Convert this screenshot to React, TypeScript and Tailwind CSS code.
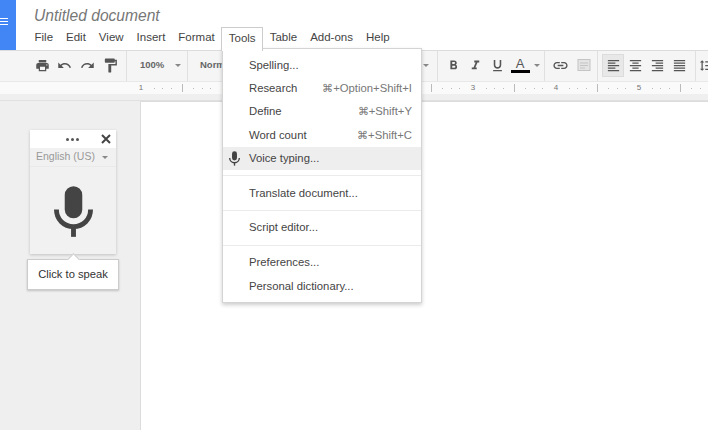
import React from "react";
import {
  MdPrint,
  MdUndo,
  MdRedo,
  MdFormatPaint,
  MdFormatBold,
  MdFormatItalic,
  MdFormatUnderlined,
  MdLink,
  MdFormatAlignLeft,
  MdFormatAlignCenter,
  MdFormatAlignRight,
  MdFormatAlignJustify,
  MdFormatLineSpacing,
} from "react-icons/md";

const menus = ["File", "Edit", "View", "Insert", "Format", "Tools", "Table", "Add-ons", "Help"];

const rulerLabels = ["1", "2", "", "", "3", "4", "5", ""];

type MenuRow = { label: string; keys?: string; active?: boolean };

const menuGroups: MenuRow[][] = [
  [
    { label: "Spelling..." },
    { label: "Research", keys: "⌘+Option+Shift+I" },
    { label: "Define", keys: "⌘+Shift+Y" },
    { label: "Word count", keys: "⌘+Shift+C" },
    { label: "Voice typing...", active: true },
  ],
  [{ label: "Translate document..." }],
  [{ label: "Script editor..." }],
  [{ label: "Preferences..." }, { label: "Personal dictionary..." }],
];

const Mic = ({ className }: { className: string }) => (
  <svg viewBox="0 0 40 52" className={className} fill="none">
    <rect x="11" y="0" width="18" height="33" rx="9" fill="currentColor" />
    <path d="M2.5 24c0 10 7.500 17.500 17.500 17.500S37.500 34 37.500 24" stroke="currentColor" strokeWidth="5" />
    <rect x="17.500" y="40" width="5" height="12" fill="currentColor" />
  </svg>
);

const Caret = () => <span className="w-0 h-0 border-x-[3px] border-x-transparent border-t-[3px] border-t-[#888]" />;

const Sep = () => <div className="w-px shrink-0 self-stretch -mb-[2px] bg-[#e0e0e0]" />;

const Tool = ({ children, className = "w-[22px]" }: { children: React.ReactNode; className?: string }) => (
  <div className={`${className} shrink-0 h-[23px] flex items-center justify-center text-[#555] text-[15px]`}>{children}</div>
);

const App = () => {
  return (
    <div className="relative w-[708px] h-[430px] overflow-hidden flex flex-col bg-[#efefef] font-['Liberation_Sans',Arial,sans-serif] text-[#444]">
      {/* Title and menu bar */}
      <header className="h-[51px] shrink-0 flex bg-white border-b border-[#dcdcdc]">
        <div className="w-[16px] h-[50px] bg-[#4285f4] flex flex-col gap-[2px] justify-center items-start pb-[8px]">
          <span className="w-[8px] h-px bg-white" />
          <span className="w-[8px] h-px bg-white" />
          <span className="w-[8px] h-px bg-white" />
        </div>
        <div className="pl-[18px] pt-[6px]">
          <h1 className="text-[15.6px] leading-[20px] italic text-[#777]">Untitled document</h1>
          <nav className="relative z-20 flex items-start mt-[1px] -ml-[6px] text-[11.500px] leading-[21px] text-[#444]">
            {menus.map((menu) =>
              menu === "Tools" ? (
                <span key={menu} className="px-[6.500px] h-[24px] bg-white border border-b-0 border-[#ccc]">
                  {menu}
                </span>
              ) : (
                <span key={menu} className="px-[6.500px]">
                  {menu}
                </span>
              )
            )}
          </nav>
        </div>
      </header>

      {/* Toolbar */}
      <div className="h-[30px] shrink-0 flex items-center bg-[#f5f5f5] pl-[31px] pb-[2px]">
        <Tool><MdPrint /></Tool>
        <Tool className="w-[23px]"><MdUndo /></Tool>
        <Tool className="w-[23px]"><MdRedo /></Tool>
        <Tool><MdFormatPaint className="text-[17px]" /></Tool>
        <div className="w-[5px] shrink-0" />
        <Sep />
        <div className="w-[60px] shrink-0 flex items-center pl-[13px] gap-[11px] text-[9.500px] font-bold text-[#666]">
          100%
          <Caret />
        </div>
        <Sep />
        <div className="w-[249px] shrink-0 pl-[12px] text-[9.500px] font-bold text-[#666] flex items-center">
          Normal
          <div className="ml-auto pr-[8px] flex"><Caret /></div>
        </div>
        <Sep />
        <div className="w-[4px] shrink-0" />
        <Tool><MdFormatBold /></Tool>
        <Tool><MdFormatItalic /></Tool>
        <Tool className="w-[23px]"><MdFormatUnderlined /></Tool>
        <Tool className="w-[22px] flex-col">
          <span className="text-[13px] leading-[13px] text-[#555]">A</span>
          <span className="w-[19px] h-[3px] bg-black" />
        </Tool>
        <div className="w-[12px] shrink-0 flex justify-center"><Caret /></div>
        <div className="w-px shrink-0" />
        <Sep />
        <div className="w-[4px] shrink-0" />
        <Tool><MdLink className="text-[17px]" /></Tool>
        <div className="w-[2px] shrink-0" />
        <Tool>
          <svg viewBox="0 0 14 14" className="w-[14px] h-[14px]" fill="none" stroke="#c4c4c4">
            <rect x="1" y="1.500" width="12" height="11" fill="#e4e4e4" />
            <path d="M3 5h8M3 7.500h8M3 10h5" />
          </svg>
        </Tool>
        <div className="w-[2px] shrink-0" />
        <Sep />
        <div className="w-[4px] shrink-0" />
        <Tool className="w-[22px] bg-[#e8e8e8] border border-[#dcdcdc]"><MdFormatAlignLeft /></Tool>
        <Tool><MdFormatAlignCenter /></Tool>
        <Tool><MdFormatAlignRight /></Tool>
        <Tool className="w-[23px]"><MdFormatAlignJustify /></Tool>
        <div className="w-[4px] shrink-0" />
        <Sep />
        <Tool className="w-[20px]"><MdFormatLineSpacing /></Tool>
      </div>

      {/* Ruler */}
      <div className="h-[20px] shrink-0 border-b border-[#e0e0e0] bg-[#efefef]">
        <div className="h-[13px] flex bg-[#fafafa] pl-[99px] border-t border-[#e8e8e8]">
          {rulerLabels.map((label, i) => (
            <div key={i} className="w-[83px] shrink-0 flex items-center text-[8px] text-[#777]">
              <span className={i === 0 ? "w-px" : "w-px h-[8px] bg-[#bbb]"} />
              <span className="flex-1 flex items-center justify-around px-[6px]">
                <span className={i === 0 ? "w-px" : "w-px h-px bg-[#bbb]"} />
                <span className={i === 0 ? "w-px" : "w-px h-px bg-[#bbb]"} />
                <span className={i === 0 ? "w-px" : "w-px h-px bg-[#bbb]"} />
                <span className="w-[10px] text-center">{label}</span>
                <span className="w-px h-px bg-[#bbb]" />
                <span className="w-px h-px bg-[#bbb]" />
                <span className="w-px h-px bg-[#bbb]" />
              </span>
            </div>
          ))}
        </div>
      </div>

      {/* Canvas */}
      <div className="flex-1 flex">
        <aside className="w-[140px] shrink-0 flex flex-col items-start pl-[30px] pt-[29px]">
          <div className="w-[86px] h-[124px] flex flex-col shadow-[0_1px_3px_rgba(0,0,0,0.2)] bg-[#f1f1f1]">
            <div className="h-[18px] bg-white flex items-center pl-[36px] pr-[5px]">
              <span className="flex gap-[2px]">
                <span className="w-[3px] h-[3px] rounded-full bg-[#555]" />
                <span className="w-[3px] h-[3px] rounded-full bg-[#555]" />
                <span className="w-[3px] h-[3px] rounded-full bg-[#555]" />
              </span>
              <svg viewBox="0 0 10 10" className="w-[10px] h-[10px] ml-auto" stroke="#444" strokeWidth="2">
                <path d="M1 1l8 8M9 1l-8 8" />
              </svg>
            </div>
            <div className="h-[19px] flex items-center justify-between pl-[6px] pr-[8px] text-[10.500px] text-[#999] border-b border-[#eaeaea]">
              English (US)
              <Caret />
            </div>
            <div className="flex-1 flex justify-center pt-[19px]">
              <Mic className="w-[39px] h-[51px] text-[#444]" />
            </div>
          </div>
          <div className="relative w-[92px] h-[31px] mt-[5px] -ml-[3px] bg-white border border-[#ccc] shadow-[0_1px_2px_rgba(0,0,0,0.2)] flex items-center justify-center text-[11.200px] text-[#333]">
            Click to speak
            <span className="absolute -top-[5px] left-[41px] w-[9px] h-[9px] rotate-45 bg-white border-l border-t border-[#ccc]" />
          </div>
        </aside>
        <main className="flex-1 bg-white border-l border-t border-[#dcdcdc]" />
      </div>

      {/* Tools menu */}
      <div className="absolute left-[222px] top-[48px] w-[200px] h-[255px] z-10 bg-white border border-[#d4d4d4] shadow-[0_2px_4px_rgba(0,0,0,0.2)] pt-[4.500px] text-[11.300px] text-[#444]">
        {menuGroups.map((group, g) => (
          <div key={g} className={g > 0 ? "border-t border-[#ebebeb] mt-[5.500px] pt-[5px]" : ""}>
            {group.map((row) => (
              <div
                key={row.label}
                className={`relative h-[23.300px] flex items-center justify-between pl-[26px] pr-[9px] ${row.active ? "bg-[#eeeeee]" : ""}`}
              >
                {row.active && <Mic className="absolute left-[6px] top-[4px] w-[11px] h-[15px] text-[#444]" />}
                <span>{row.label}</span>
                {row.keys && <span className="text-[#777]">{row.keys}</span>}
              </div>
            ))}
          </div>
        ))}
      </div>
    </div>
  );
};

export default App;
